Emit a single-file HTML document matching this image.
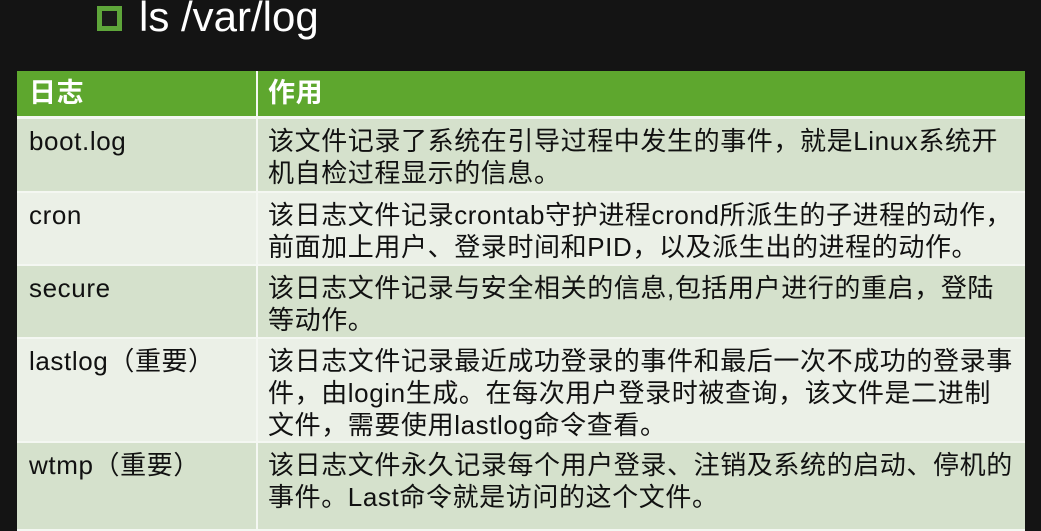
<!DOCTYPE html>
<html><head><meta charset="utf-8"><style>
body{margin:0;width:1041px;height:517px;background:#141414;overflow:hidden;position:relative;font-family:"Liberation Sans","Noto Sans CJK SC",sans-serif}
.t{position:absolute;left:139px;top:-7px;color:#fff;font-size:42px}
.sq{position:absolute;left:97px;top:6px;width:15px;height:15px;border:5px solid #5ea53a;background:#1a1a1a}
table{position:absolute;left:17px;top:71px;width:1008px;border-collapse:collapse;font-size:26px;letter-spacing:0.6px;color:#111}
td{vertical-align:top;padding:6px 0 0 10px;line-height:32px;border-bottom:2px solid #f4f7f2}
td:first-child{width:227px;border-right:2px solid #f4f7f2;padding-left:12px}
tr.h td{background:#5ea72e;color:#fff;font-weight:bold;height:45px;font-size:27px;line-height:45px;padding-top:0;border-bottom:3px solid #f4f7f2}
tr.d td{background:#d5e1cc}
tr.l td{background:#ebf0e7}
</style></head><body>
<div class="sq"></div><div class="t">ls /var/log</div>
<table>
<tr class="h"><td>日志</td><td>作用</td></tr>
<tr class="d"><td style="height:66px">boot.log</td><td>该文件记录了系统在引导过程中发生的事件，就是Linux系统开<br>机自检过程显示的信息。</td></tr>
<tr class="l"><td style="height:65px">cron</td><td>该日志文件记录crontab守护进程crond所派生的子进程的动作，<br>前面加上用户、登录时间和PID，以及派生出的进程的动作。</td></tr>
<tr class="d"><td style="height:65px">secure</td><td>该日志文件记录与安全相关的信息,包括用户进行的重启，登陆<br>等动作。</td></tr>
<tr class="l"><td style="height:92px">lastlog（重要）</td><td>该日志文件记录最近成功登录的事件和最后一次不成功的登录事<br>件，由login生成。在每次用户登录时被查询，该文件是二进制<br>文件，需要使用lastlog命令查看。</td></tr>
<tr class="d"><td style="height:80px">wtmp（重要）</td><td>该日志文件永久记录每个用户登录、注销及系统的启动、停机的<br>事件。Last命令就是访问的这个文件。</td></tr>
</table>
</body></html>
